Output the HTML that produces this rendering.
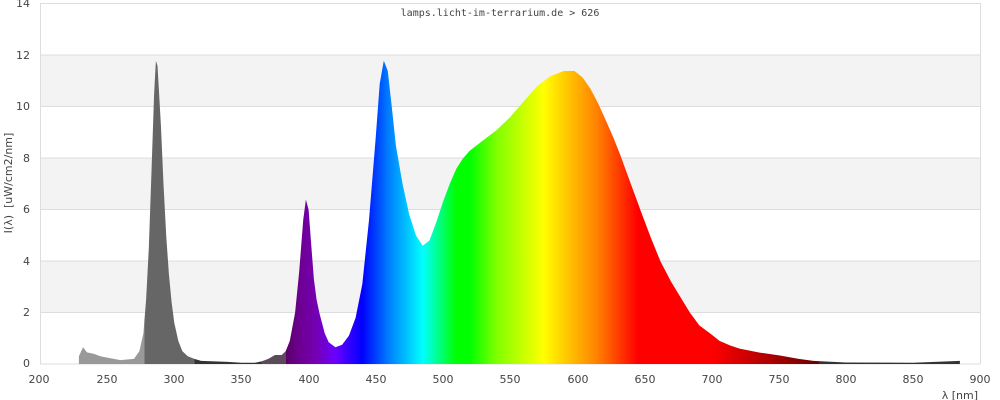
<!DOCTYPE html>
<html><head><meta charset="utf-8"><style>
html,body{margin:0;padding:0;background:#fff;width:1000px;height:400px;overflow:hidden}
svg{display:block;font-family:"DejaVu Sans","Liberation Sans",sans-serif}
</style></head><body>
<svg id="s" width="1000" height="400" viewBox="0 0 1000 400">
<defs>
<linearGradient id="g" gradientUnits="userSpaceOnUse" x1="0" y1="0" x2="1000" y2="0">
<stop offset="0.080" stop-color="#999"/><stop offset="0.1447" stop-color="#999"/>
<stop offset="0.1447" stop-color="#666"/><stop offset="0.1944" stop-color="#666"/>
<stop offset="0.1944" stop-color="#333"/><stop offset="0.2616" stop-color="#333"/>
<stop offset="0.2616" stop-color="#5a4a5a"/><stop offset="0.2858" stop-color="#5a4a5a"/>
<stop offset="0.2858" stop-color="#5a0068"/>
<stop offset="0.3019" stop-color="#6e0096"/>
<stop offset="0.3153" stop-color="#7500b0"/>
<stop offset="0.3354" stop-color="#6a00ff"/>
<stop offset="0.3623" stop-color="#0000ff"/>
<stop offset="0.3892" stop-color="#0080ff"/>
<stop offset="0.4227" stop-color="#00ffff"/>
<stop offset="0.4563" stop-color="#00ff00"/>
<stop offset="0.4697" stop-color="#00ff00"/>
<stop offset="0.4966" stop-color="#80ff00"/>
<stop offset="0.5436" stop-color="#ffff00"/>
<stop offset="0.5973" stop-color="#ff8000"/>
<stop offset="0.6376" stop-color="#ff0000"/>
<stop offset="0.7115" stop-color="#ff0000"/>
<stop offset="0.8055" stop-color="#7a0000"/>
<stop offset="0.8189" stop-color="#6a0000"/>
<stop offset="0.8189" stop-color="#333"/>
<stop offset="1" stop-color="#333"/>
</linearGradient>
</defs>
<rect x="40" y="55" width="940" height="51.4" fill="#f3f3f3"/>
<rect x="40" y="158" width="940" height="51.4" fill="#f3f3f3"/>
<rect x="40" y="261" width="940" height="51.4" fill="#f3f3f3"/>
<g stroke="#ddd" stroke-width="1">
<line x1="40" y1="3.5" x2="980" y2="3.5"/>
<line x1="40" y1="55" x2="980" y2="55"/>
<line x1="40" y1="106.5" x2="980" y2="106.5"/>
<line x1="40" y1="158" x2="980" y2="158"/>
<line x1="40" y1="209.5" x2="980" y2="209.5"/>
<line x1="40" y1="261" x2="980" y2="261"/>
<line x1="40" y1="312.5" x2="980" y2="312.5"/>
<line x1="40.5" y1="3" x2="40.5" y2="364"/>
<line x1="980.5" y1="3" x2="980.5" y2="364"/>
<line x1="40" y1="364" x2="980" y2="364"/>
</g>
<path id="sp" fill="url(#g)" d=""/>
<g font-size="11" fill="#444" text-anchor="end">
<text x="30" y="367">0</text><text x="30" y="316">2</text><text x="30" y="265">4</text>
<text x="30" y="213">6</text><text x="30" y="162">8</text><text x="30" y="110">10</text>
<text x="30" y="59">12</text><text x="30" y="7">14</text>
</g>
<g font-size="11" fill="#444" text-anchor="middle">
<text x="39" y="383">200</text><text x="107" y="383">250</text><text x="174" y="383">300</text>
<text x="241" y="383">350</text><text x="309" y="383">400</text><text x="376" y="383">450</text>
<text x="443" y="383">500</text><text x="510" y="383">550</text><text x="578" y="383">600</text>
<text x="645" y="383">650</text><text x="712" y="383">700</text><text x="779" y="383">750</text>
<text x="846" y="383">800</text><text x="913" y="383">850</text><text x="980" y="383">900</text>
</g>
<text x="978" y="399" font-size="11" fill="#444" text-anchor="end">λ [nm]</text>
<text transform="translate(12,183) rotate(-90)" font-size="11" fill="#444" text-anchor="middle" xml:space="preserve">I(λ)  [uW/cm2/nm]</text>
<text x="500" y="16" font-size="10" fill="#444" text-anchor="middle" font-family="DejaVu Sans Mono,Liberation Mono,monospace">lamps.licht-im-terrarium.de &gt; 626</text>
</svg>
<script>
var d=[[229,0],[229,0.3],[232,0.65],[235,0.45],[240,0.4],[245,0.3],[250,0.25],[260,0.15],[270,0.2],[274,0.5],[277,1.2],[279,2.5],[281,4.5],[283,7.5],[285,10.5],[286.3,11.8],[287.5,11.6],[290,9.3],[292,7],[294,5],[296,3.5],[298,2.4],[300,1.6],[303,0.9],[306,0.5],[310,0.3],[315,0.2],[320,0.12],[330,0.1],[340,0.08],[350,0.05],[360,0.05],[365,0.1],[370,0.2],[375,0.35],[380,0.35],[383,0.5],[386,0.9],[390,2],[393,3.6],[396,5.6],[398,6.4],[400,6],[402,4.6],[404,3.3],[406,2.5],[408,2],[410,1.6],[412,1.2],[415,0.85],[420,0.65],[425,0.75],[430,1.1],[435,1.8],[440,3.1],[445,5.6],[450,8.8],[453,10.9],[456,11.8],[459,11.4],[462,10],[465,8.5],[470,7],[475,5.8],[480,5],[485,4.6],[490,4.8],[495,5.5],[500,6.3],[505,7],[510,7.6],[515,8],[520,8.3],[530,8.7],[540,9.1],[550,9.6],[560,10.2],[570,10.8],[580,11.2],[590,11.4],[598,11.4],[604,11.15],[610,10.7],[616,10.1],[622,9.4],[627,8.8],[632,8.15],[640,7.0],[647,6.0],[655,4.9],[662,4.0],[670,3.2],[677,2.6],[684,2.0],[691,1.5],[700,1.15],[706,0.9],[714,0.72],[721,0.6],[735,0.45],[751,0.33],[765,0.2],[776,0.12],[800,0.06],[850,0.05],[885,0.12],[885,0]];
var p='';d.forEach(function(a,i){var x=40+(a[0]-200)*940/700,y=364-a[1]*25.7;p+=(i?'L':'M')+x.toFixed(1)+' '+y.toFixed(1);});
document.getElementById('sp').setAttribute('d',p+'Z');
</script>
</body></html>
